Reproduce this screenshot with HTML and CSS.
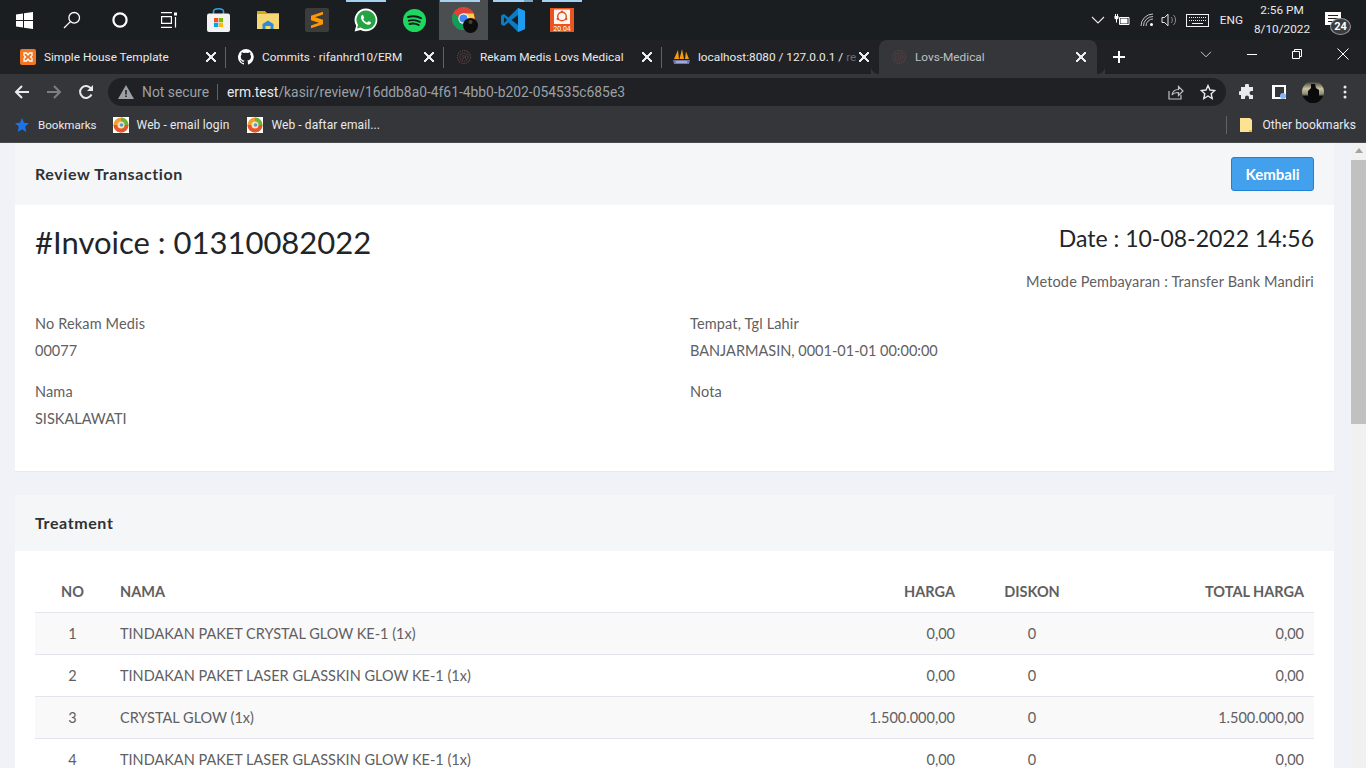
FILE: index.html
```html
<!DOCTYPE html>
<html lang="en">
<head>
    <meta charset="UTF-8">
    <title>Lovs-Medical</title>
    <link rel="stylesheet" href="styles.css">
</head>
<body>

<div class="taskbar">
    <div class="task-item task-sys"><svg width="17" height="17" viewBox="0 0 17 17"><path fill="#fff" d="M0 2.400 7 1.400V8H0zM8 1.200 17 0V8H8zM0 9H7V15.600L0 14.600zM8 9H17V17L8 15.800z"/></svg></div>
    <div class="task-item task-sys"><svg width="18" height="18" viewBox="0 0 18 18" fill="none" stroke="#fff" stroke-width="1.300"><circle cx="11.200" cy="6.800" r="5.300"/><path d="M7.400 10.600 1 17"/></svg></div>
    <div class="task-item task-sys"><svg width="16" height="16" viewBox="0 0 16 16" fill="none" stroke="#fff" stroke-width="2.200"><circle cx="8" cy="8" r="6.600"/></svg></div>
    <div class="task-item task-sys"><svg width="17" height="16" viewBox="0 0 17 16" fill="none" stroke="#fff" stroke-width="1.200"><path d="M1 .6H12M1 15.400H12M1.600 4.600H11.400V11.400H1.600z"/><path d="M15.500 5V15.500"/><path d="M14 .5h3v3h-3z" fill="#fff" stroke="none"/></svg></div>
    <div class="task-item task-first"><svg width="23" height="24" viewBox="0 0 23 24"><path d="M6.500 7V3.500C6.500 1.500 8 .8 11.500.8S16.500 1.500 16.500 3.500V7" fill="none" stroke="#2aa4e6" stroke-width="1.600"/><rect y="5.500" width="23" height="18.500" rx="2" fill="#f2f2f2"/><path fill="#f25022" d="M7 10h4.200v4.200H7z"/><path fill="#7fba00" d="M11.800 10H16v4.200h-4.200z"/><path fill="#00a4ef" d="M7 14.800h4.200V19H7z"/><path fill="#ffb900" d="M11.800 14.800H16V19h-4.200z"/></svg></div>
    <div class="task-item"><svg width="22" height="18" viewBox="0 0 22 18"><path fill="#d9a21f" d="M0 0h8l2 2h12v6H0z"/><path fill="#f7d774" d="M0 3h22v15H0z"/><path fill="#2f8ad8" d="M5.500 13 11 9.500 16.500 13v5h-3v-3h-5v3h-3z"/></svg></div>
    <div class="task-item"><svg width="24" height="24" viewBox="0 0 24 24"><rect width="24" height="24" rx="2" fill="#3c3c3c"/><path fill="#ff9800" d="M18 3.800 6 7.800v4.400l8 2.600-8 2.800v2.600l12-4v-4.500L10 9.200l8-2.700z"/></svg></div>
    <div class="task-item"><span class="line"></span><svg width="24" height="24" viewBox="0 0 24 24"><path fill="#fff" d="M12 .5a11.400 11.400 0 0 0-9.800 17.200L.6 23.500l6-1.500A11.400 11.400 0 1 0 12 .5z"/><path fill="#25a244" d="M12 2.500a9.400 9.400 0 0 0-8 14.400l-1 3.600 3.700-1A9.400 9.400 0 1 0 12 2.500z"/><path fill="#fff" d="M8.700 6.800c-.3 0-.8.200-1.100.6-.8.900-1 2.300-.3 3.800 1.200 2.500 3.200 4.400 5.800 5.300 1.500.5 2.800.2 3.500-.7.400-.5.500-1.200.4-1.500l-2.200-1.100c-.3-.1-.5 0-.7.200l-.7.900c-.2.200-.4.200-.6.100-1.500-.6-2.600-1.600-3.400-3-.1-.2-.1-.4.100-.6l.6-.7c.1-.2.100-.4 0-.6l-.9-2.200c-.1-.3-.3-.4-.5-.4z"/></svg></div>
    <div class="task-item"><svg width="23" height="23" viewBox="0 0 23 23"><circle cx="11.500" cy="11.500" r="11.500" fill="#1ed760"/><path d="M5 8c4.500-1.200 9-1 13 1.200M5.800 11.700c3.800-1 7.600-.8 11 1.100M6.500 15c3.200-.8 6.300-.6 9.200 1" fill="none" stroke="#14181a" stroke-width="1.900" stroke-linecap="round"/></svg></div>
    <div class="task-item active"><span class="line"></span><svg class="chrome-icon" width="26" height="26" viewBox="0 0 26 26"><circle cx="11.500" cy="11.500" r="11.500" fill="#db4437"/><path fill="#ffcd40" d="M11.500 6.500h10a11.500 11.500 0 0 1-5.700 15l-4-8z"/><path fill="#0f9d58" d="M1.500 6a11.500 11.500 0 0 0 10.800 17l4-7.500-5-2z"/><circle cx="11.500" cy="11.500" r="5.200" fill="#fff"/><circle cx="11.500" cy="11.500" r="4.100" fill="#4285f4"/><circle cx="18.500" cy="18.500" r="7.500" fill="#0d0d0d"/><circle cx="18.500" cy="15" r="2" fill="#4a4436"/></svg></div>
    <div class="task-item"><span class="line line-stack"></span><svg width="24" height="24" viewBox="0 0 24 24"><path fill="#0a7cc4" d="M17 0 7.500 9.500 3 6 0 7.500v9L3 18l4.500-3.500L17 24l7-3V3zM3 9l3 3-3 3zm14-2v10l-6.500-5z"/><path fill="#1f9cf0" d="M17 0l7 3v18l-7 3z"/></svg></div>
    <div class="task-item"><span class="line"></span><svg width="24" height="24" viewBox="0 0 24 24"><path fill="#e95420" d="M0 0h24v24H0z"/><rect x="4" y="1.500" width="16" height="14.500" fill="#fff" opacity=".95"/><circle cx="12" cy="8.500" r="4.300" fill="none" stroke="#e95420" stroke-width="1.500"/><circle cx="12" cy="3.800" r="1.200" fill="#e95420"/><circle cx="7.800" cy="11" r="1.200" fill="#e95420"/><circle cx="16.200" cy="11" r="1.200" fill="#e95420"/><text x="12" y="22.500" class="ubuntu-ver">20.04</text></svg></div>
    <div class="tray">
        <svg width="14" height="8" viewBox="0 0 14 8" fill="none" stroke="#e8e8e8" stroke-width="1.100"><path d="M1 1l6 6 6-6"/></svg>
        <svg class="tray-power" width="16" height="12" viewBox="0 0 16 12"><path fill="none" stroke="#fff" d="M5.500 3.500H15V10.500H5.500z"/><path fill="#fff" d="M6.500 4.500h7v5h-7zM1 0h1v2H1zM3 0h1v2H3zM.5 2h4v2.500l-1.500 1v3H2v-3L.5 4.500z"/></svg>
        <svg class="tray-wifi" width="15" height="14" viewBox="0 0 15 14" fill="none" stroke="#d4d4d4"><path d="M1 13A12 12 0 0 1 13 1M3.500 13A9.500 9.500 0 0 1 13 3.500M6 13A7 7 0 0 1 13 6" stroke-width=".9"/><circle cx="11.500" cy="11.500" r="1.500" fill="#fff" stroke="none"/></svg>
        <svg class="tray-sound" width="17" height="14" viewBox="0 0 17 14" fill="none" stroke="#e8e8e8"><path d="M1 4.500h2.500L7 1.200v11.600L3.500 9.500H1z"/><path d="M10 4a4 4 0 0 1 0 6M12.500 2a7 7 0 0 1 0 10" stroke="#8a8a8a"/></svg>
        <svg class="tray-keys" width="23" height="13" viewBox="0 0 23 13" fill="none" stroke="#f0f0f0"><rect x=".5" y=".5" width="22" height="12"/><path d="M3 3.500h17M3 6.500h17" stroke-dasharray="1 1"/><path d="M6 9.500h11"/></svg>
        <span class="tray-lang">ENG</span>
        <div class="tray-clock"><span>2:56 PM</span><span>8/10/2022</span></div>
        <div class="tray-note">
            <svg width="16" height="13" viewBox="0 0 16 13"><path fill="#fff" d="M0 0h16v13H0z"/><path stroke="#222" d="M3 3.500h10M3 6.500h10M3 9.500h6"/></svg>
            <span class="tray-badge">24</span>
        </div>
    </div>
</div>

<div class="tabstrip">
    <div class="tab">
        <svg class="favicon" width="16" height="16" viewBox="0 0 16 16"><rect width="16" height="16" rx="2" fill="#f37623"/><path d="M4 4h2.500L8 6l1.500-2H12v2.500L10.500 8 12 9.500V12H9.500L8 10l-1.500 2H4V9.500L5.500 8 4 6.500z" fill="none" stroke="#fff" stroke-width="1.300"/></svg>
        <span class="tab-title">Simple House Template</span>
        <span class="tab-close"></span>
    </div>
    <div class="tab">
        <svg class="favicon" width="16" height="16" viewBox="0 0 16 16"><path fill="#fff" d="M8 0a8 8 0 0 0-2.500 15.600c.4.100.5-.2.500-.4v-1.400c-2.200.5-2.700-1-2.700-1-.4-.9-.9-1.200-.9-1.200-.7-.5.100-.5.100-.5.800.1 1.200.8 1.200.8.700 1.200 1.900.9 2.300.7.100-.5.300-.9.500-1.100-1.800-.2-3.700-.9-3.700-4 0-.9.300-1.600.8-2.100-.1-.2-.4-1 .1-2.100 0 0 .7-.2 2.200.8a7.600 7.600 0 0 1 4 0c1.500-1 2.200-.8 2.200-.8.400 1.100.2 1.900.1 2.100.5.600.8 1.300.8 2.100 0 3.100-1.900 3.700-3.700 3.900.3.300.6.800.6 1.500v2.200c0 .2.100.5.600.4A8 8 0 0 0 8 0z"/></svg>
        <span class="tab-title">Commits · rifanhrd10/ERM</span>
        <span class="tab-close"></span>
    </div>
    <div class="tab">
        <svg class="favicon" width="16" height="16" viewBox="0 0 16 16" fill="none" stroke="#5a3f3f" stroke-width="1.200" stroke-dasharray="1.500 .8"><circle cx="8" cy="8" r="6.500"/><circle cx="8" cy="8" r="4"/><circle cx="8" cy="8" r="1.500"/></svg>
        <span class="tab-title">Rekam Medis Lovs Medical</span>
        <span class="tab-close"></span>
    </div>
    <div class="tab tab-pma">
        <svg class="favicon" width="17" height="16" viewBox="0 0 17 16"><path fill="#f89c0e" d="M5 1 6 10H1zM9 0 11 10H6.500zM13 2.500 16 10h-4z"/><path fill="#6c78af" d="M0 11h17l-1 4H1z"/><path fill="#d8dcef" d="M3 12.500h11v1H3z"/></svg>
        <span class="tab-title">localhost:8080 / 127.0.0.1 / <span class="fade">re</span></span>
        <span class="tab-close"></span>
    </div>
    <div class="tab tab-active">
        <svg class="favicon" width="16" height="16" viewBox="0 0 16 16" fill="none" stroke="#5a3f3f" stroke-width="1.200" stroke-dasharray="1.500 .8"><circle cx="8" cy="8" r="6.500"/><circle cx="8" cy="8" r="4"/><circle cx="8" cy="8" r="1.500"/></svg>
        <span class="tab-title">Lovs-Medical</span>
        <span class="tab-close"></span>
    </div>
    <svg class="tab-new" width="14" height="14" viewBox="0 0 14 14" stroke="#fff" stroke-width="2"><path d="M7 1v12M1 7h12"/></svg>
    <div class="win-controls">
        <svg width="12" height="7" viewBox="0 0 12 7" fill="none" stroke="#c8c8c8"><path d="M1 .8l5 5 5-5"/></svg>
        <svg width="10" height="10" viewBox="0 0 10 10" stroke="#fff"><path d="M0 5.500h10"/></svg>
        <svg width="10" height="10" viewBox="0 0 10 10" fill="none" stroke="#fff"><path d="M.5 2.500h7v7h-7zM2.500 2.500v-2h7v7h-2"/></svg>
        <svg width="12" height="12" viewBox="0 0 12 12" stroke="#fff"><path d="M.5.500l11 11M11.500.500l-11 11"/></svg>
    </div>
</div>

<div class="toolbar">
    <svg class="nav-btn" width="16" height="16" viewBox="0 0 16 16" fill="none" stroke="#e8eaed" stroke-width="2"><path d="M15 8H2M8 2 2 8l6 6"/></svg>
    <svg class="nav-btn" width="16" height="16" viewBox="0 0 16 16" fill="none" stroke="#7d7f83" stroke-width="2"><path d="M1 8h13M8 2l6 6-6 6"/></svg>
    <svg class="nav-btn" width="16" height="16" viewBox="0 0 16 16" fill="none" stroke="#e8eaed" stroke-width="2"><path d="M13.500 10.500A6 6 0 1 1 13 4.500"/><path fill="#e8eaed" stroke="none" d="M15 1v6H9z"/></svg>
    <div class="omnibox">
        <svg width="16" height="14" viewBox="0 0 16 14"><path fill="#9aa0a6" d="M8 0l8 14H0z"/><path fill="#202124" d="M7.200 5h1.600v4.500H7.200zM7.200 10.500h1.600V12H7.200z"/></svg>
        <span class="secure">Not secure</span>
        <span class="omni-sep"></span>
        <span class="url"><b>erm.test</b>/kasir/review/16ddb8a0-4f61-4bb0-b202-054535c685e3</span>
        <svg class="omni-share" width="16" height="16" viewBox="0 0 16 16" fill="none" stroke="#bdc1c6" stroke-width="1.200"><path d="M1 7v8h12v-4"/><path d="M4 11c.5-3.500 3-5.500 6.500-5.500V2.500L15 7l-4.500 4.500V8.500C8 8.500 5.500 9 4 11z"/></svg>
        <svg class="omni-star" width="16" height="16" viewBox="0 0 16 16" fill="none" stroke="#e8eaed" stroke-width="1.400"><path d="M8 1.500l2 4.500 4.800.5-3.600 3.200 1 4.800L8 12l-4.200 2.500 1-4.800L1.200 6.500 6 6z"/></svg>
    </div>
    <svg class="tool-puzzle" width="16" height="16" viewBox="0 0 16 16"><path fill="#e8eaed" d="M6 1.500a2 2 0 0 1 4 0V3h4v4h-1.500a2 2 0 0 0 0 4H14v4h-4v-1.500a2 2 0 0 0-4 0V15H2v-4h-.5a2 2 0 0 1 0-4H2V3h4z"/></svg>
    <svg class="tool-panel" width="14" height="14" viewBox="0 0 14 14"><path fill="none" stroke="#fff" stroke-width="2" d="M1 1h12v12H1z"/><path fill="#fff" d="M1 1h2v12H1z"/><circle cx="11" cy="11" r="3" fill="#8ab4f8"/></svg>
    <div class="avatar"><svg width="22" height="22" viewBox="0 0 22 22"><defs><linearGradient id="sky" x1="0" y1="0" x2="0" y2="1"><stop offset="0" stop-color="#2e2c26"/><stop offset=".35" stop-color="#c9c4a5"/><stop offset=".6" stop-color="#8b8a70"/><stop offset=".7" stop-color="#0b0b0b"/></linearGradient></defs><path fill="url(#sky)" d="M0 0h22v22H0z"/><path fill="#0b0b0b" d="M9 3h4l1 4 3 2v13H6V10l3-3z"/></svg></div>
    <svg class="tool-dots" width="4" height="14" viewBox="0 0 4 14" fill="#e8eaed"><circle cx="2" cy="2" r="1.500"/><circle cx="2" cy="7" r="1.500"/><circle cx="2" cy="12" r="1.500"/></svg>
</div>

<div class="bookmarks">
    <svg class="bm-star" width="14" height="14" viewBox="0 0 14 14"><path fill="#1a73e8" d="M7 0l2 4.800 5 .5-3.800 3.300L11.300 14 7 11.200 2.700 14l1.100-5.400L0 5.300l5-.5z"/></svg>
    <span class="bm-label bm-first">Bookmarks</span>
    <svg class="bm-icon" width="16" height="16" viewBox="0 0 16 16"><path fill="#fff" d="M0 0h16v16H0z"/><circle cx="8" cy="8" r="7.500" fill="#f0a030"/><path fill="#6cb33f" d="M8 .5A7.500 7.500 0 0 1 15.500 8H8z"/><path fill="#e4572e" d="M.5 8h15A7.500 7.500 0 0 1 .5 8z"/><circle cx="8" cy="8" r="3.500" fill="#f7e3b5"/><circle cx="8.500" cy="8" r="1.800" fill="#5b9bd5"/></svg>
    <span class="bm-label">Web - email login</span>
    <svg class="bm-icon" width="16" height="16" viewBox="0 0 16 16"><path fill="#fff" d="M0 0h16v16H0z"/><circle cx="8" cy="8" r="7.500" fill="#f0a030"/><path fill="#6cb33f" d="M8 .5A7.500 7.500 0 0 1 15.500 8H8z"/><path fill="#e4572e" d="M.5 8h15A7.500 7.500 0 0 1 .5 8z"/><circle cx="8" cy="8" r="3.500" fill="#f7e3b5"/><circle cx="8.500" cy="8" r="1.800" fill="#5b9bd5"/></svg>
    <span class="bm-label">Web - daftar email...</span>
    <span class="bm-sep"></span>
    <svg width="12" height="14" viewBox="0 0 12 14"><path fill="#fde293" d="M0 0h10l2 2v12H0z"/><path fill="#f6bf26" d="M9 12h3v2H9z"/></svg>
    <span class="bm-label bm-other">Other bookmarks</span>
</div>

<div class="viewport">
    <div class="page">
        <section class="card card-invoice">
            <header class="card-header">
                <h4>Review Transaction</h4>
                <a class="btn-back">Kembali</a>
            </header>
            <div class="card-body">
                <div class="invoice-top">
                    <h2>#Invoice : 01310082022</h2>
                    <div class="invoice-meta">
                        <h3>Date : 10-08-2022 14:56</h3>
                        <p>Metode Pembayaran : Transfer Bank Mandiri</p>
                    </div>
                </div>
                <div class="fields">
                    <div class="field"><span class="field-label">No Rekam Medis</span><span>00077</span></div>
                    <div class="field"><span class="field-label">Tempat, Tgl Lahir</span><span>BANJARMASIN, 0001-01-01 00:00:00</span></div>
                    <div class="field"><span class="field-label">Nama</span><span>SISKALAWATI</span></div>
                    <div class="field"><span class="field-label">Nota</span></div>
                </div>
            </div>
        </section>

        <section class="card">
            <header class="card-header card-header-plain">
                <h4>Treatment</h4>
            </header>
            <div class="card-body-table">
                <table class="treatment">
                    <thead>
                        <tr>
                            <th class="col-no">NO</th>
                            <th class="col-name">NAMA</th>
                            <th class="col-price">HARGA</th>
                            <th class="col-disc">DISKON</th>
                            <th class="col-total">TOTAL HARGA</th>
                        </tr>
                    </thead>
                    <tbody>
                        <tr>
                            <td class="col-no">1</td>
                            <td class="col-name">TINDAKAN PAKET CRYSTAL GLOW KE-1 (1x)</td>
                            <td class="col-price">0,00</td>
                            <td class="col-disc">0</td>
                            <td class="col-total">0,00</td>
                        </tr>
                        <tr>
                            <td class="col-no">2</td>
                            <td class="col-name">TINDAKAN PAKET LASER GLASSKIN GLOW KE-1 (1x)</td>
                            <td class="col-price">0,00</td>
                            <td class="col-disc">0</td>
                            <td class="col-total">0,00</td>
                        </tr>
                        <tr>
                            <td class="col-no">3</td>
                            <td class="col-name">CRYSTAL GLOW (1x)</td>
                            <td class="col-price">1.500.000,00</td>
                            <td class="col-disc">0</td>
                            <td class="col-total">1.500.000,00</td>
                        </tr>
                        <tr>
                            <td class="col-no">4</td>
                            <td class="col-name">TINDAKAN PAKET LASER GLASSKIN GLOW KE-1 (1x)</td>
                            <td class="col-price">0,00</td>
                            <td class="col-disc">0</td>
                            <td class="col-total">0,00</td>
                        </tr>
                    </tbody>
                </table>
            </div>
        </section>
    </div>
    <div class="scrollbar">
        <span class="scroll-arrow"></span>
        <span class="scroll-thumb"></span>
    </div>
</div>

</body>
</html>
```

FILE: styles.css
```css
* {
    box-sizing: border-box;
}
html, body {
    margin: 0;
    height: 768px;
    overflow: hidden;
}
body {
    display: flex;
    flex-direction: column;
    font-family: Roboto, Arial, sans-serif;
    background-color: #f1f2f7;
}

/* windows taskbar */
.taskbar {
    height: 40px;
    flex: none;
    display: flex;
    background-color: #1b1e21;
    color: #fff;
}
.task-item {
    width: 49px;
    height: 40px;
    flex: none;
    position: relative;
    display: flex;
    align-items: center;
    justify-content: center;
}
.task-sys {
    width: 48px;
}
.task-first {
    margin-left: 2px;
}
.task-item.active {
    background-color: #4b4e51;
}
.chrome-icon {
    margin-left: 3px;
}
.line {
    position: absolute;
    top: 0;
    left: 5px;
    right: 4px;
    height: 2px;
    background-color: #a6d0f0;
}
.active .line {
    left: 1px;
    right: 8px;
}
.line-stack {
    border-right: 9px solid #7ea4c2;
}
.ubuntu-ver {
    font-size: 7px;
    fill: #fff;
    text-anchor: middle;
}
.tray {
    margin-left: auto;
    display: flex;
    align-items: center;
    padding-right: 17px;
    font-size: 11.8px;
}
.tray-power {
    margin-left: 9px;
}
.tray-wifi {
    margin-left: 10px;
}
.tray-sound {
    margin-left: 6px;
}
.tray-keys {
    margin-left: 8px;
}
.tray-lang {
    margin-left: 11px;
    color: #e8e8e8;
}
.tray-clock {
    width: 70px;
    margin-left: 4px;
    margin-right: 8px;
    display: flex;
    flex-direction: column;
    align-items: center;
    line-height: 19px;
    color: #e8e8e8;
}
.tray-note {
    position: relative;
    width: 24px;
    height: 24px;
}
.tray-note svg {
    display: block;
    margin-top: 4px;
}
.tray-badge {
    position: absolute;
    left: 5px;
    top: 10px;
    width: 21px;
    height: 17px;
    border-radius: 50%;
    border: 1px solid #999;
    background-color: #3a3c3e;
    font-size: 11px;
    font-weight: 700;
    line-height: 15px;
    text-align: center;
}

/* chrome tabs */
.tabstrip {
    height: 34px;
    flex: none;
    display: flex;
    align-items: flex-end;
    padding-left: 8px;
    background-color: #202124;
    color: #e8eaed;
    font-size: 11.8px;
}
.tab {
    width: 218px;
    height: 34px;
    flex: none;
    display: flex;
    align-items: center;
    padding-left: 12px;
    padding-right: 10px;
    position: relative;
}
.tab::after {
    content: "";
    position: absolute;
    right: 0;
    top: 7px;
    width: 1px;
    height: 21px;
    background-color: #5f6368;
}
.tab-pma {
    width: 217px;
}
.tab-pma::after {
    display: none;
}
.tab-pma .favicon {
    margin-left: -1px;
}
.fade {
    color: #6a6c70;
}
.tab-active {
    background-color: #35363a;
    border-radius: 8px 8px 0 0;
    padding-right: 11px;
}
.tab-active::after {
    display: none;
}
/* the little curves at the foot of the active tab */
.tab-active::before {
    content: "";
    position: absolute;
    left: -8px;
    right: -8px;
    bottom: 0;
    height: 8px;
    background:
        radial-gradient(circle at 0 0, transparent 8px, #35363a 8px) right top / 8px 8px no-repeat,
        radial-gradient(circle at 100% 0, transparent 8px, #35363a 8px) left top / 8px 8px no-repeat;
}
.favicon {
    flex: none;
    margin-right: 8px;
}
.tab-title {
    flex: 1;
    white-space: nowrap;
}
.tab-active .tab-title {
    color: #bdc1c6;
}
.tab-close {
    flex: none;
    width: 10px;
    height: 10px;
    background:
        linear-gradient(45deg, transparent 44%, #e8eaed 44%, #e8eaed 56%, transparent 56%),
        linear-gradient(-45deg, transparent 44%, #e8eaed 44%, #e8eaed 56%, transparent 56%);
}
.tab-new {
    margin-left: 15px;
    margin-bottom: 10px;
    flex: none;
}
.win-controls {
    flex: 1;
    height: 34px;
    display: flex;
    align-items: center;
    justify-content: flex-end;
    gap: 35px;
    padding: 0 17px 6px 0;
}

/* chrome toolbar */
.toolbar {
    height: 36px;
    flex: none;
    display: flex;
    align-items: center;
    padding-left: 14px;
    background-color: #35363a;
}
.nav-btn {
    flex: none;
    margin-right: 16px;
}
.omnibox {
    width: 1118px;
    height: 28px;
    margin-left: -2px;
    flex: none;
    display: flex;
    align-items: center;
    padding-left: 10px;
    border-radius: 14px;
    background-color: #202124;
    font-size: 13.85px;
}
.secure {
    margin-left: 8px;
    color: #9aa0a6;
}
.omni-sep {
    width: 1px;
    height: 16px;
    margin: 0 9px 0 8px;
    background-color: #5f6368;
}
.url {
    color: #9aa0a6;
    white-space: nowrap;
}
.url b {
    font-weight: 400;
    color: #e8eaed;
}
.omni-share {
    margin-left: auto;
}
.omni-star {
    margin-left: 16px;
    margin-right: 10px;
}
.tool-puzzle {
    flex: none;
    margin-left: 13px;
}
.tool-panel {
    flex: none;
    margin-left: 17px;
}
.avatar {
    width: 22px;
    height: 22px;
    margin-left: 16px;
    border-radius: 50%;
    overflow: hidden;
    flex: none;
}
.tool-dots {
    margin-left: 19px;
    flex: none;
}

/* chrome bookmarks */
.bookmarks {
    height: 33px;
    flex: none;
    display: flex;
    align-items: center;
    padding: 0 10px 3px 15px;
    background-color: #35363a;
    border-bottom: 1px solid #4a4b4f;
    color: #e8eaed;
    font-size: 12px;
}
.bm-label {
    white-space: nowrap;
    letter-spacing: .1px;
}
.bm-first {
    margin-left: 9px;
    margin-right: 16px;
    font-size: 11.6px;
    letter-spacing: 0;
}
.bm-icon {
    flex: none;
    margin-right: 8px;
}
.bm-icon + .bm-label {
    margin-right: 18px;
}
.bm-sep {
    width: 1px;
    height: 18px;
    margin-left: auto;
    margin-right: 13px;
    background-color: #5f6368;
}
.bm-other {
    margin-left: 10px;
}

/* page */
.viewport {
    flex: 1;
    min-height: 0;
    display: flex;
    overflow: hidden;
}
.page {
    width: 1351px;
    padding: 0 17px 0 15px;
    flex: none;
    font-family: Lato, sans-serif;
    font-size: 14.5px;
    color: #5f6062;
}
.card {
    background-color: #fff;
}
.card-invoice {
    margin-bottom: 23px;
    border-bottom: 1px solid #e8e9ef;
}
.card-header {
    height: 62px;
    display: flex;
    align-items: center;
    justify-content: space-between;
    padding: 0 20px;
    background-color: #f5f6f8;
}
.card-header-plain {
    height: 56px;
}
.card-header h4 {
    margin: 0 0 2px;
    font-size: 16px;
    font-weight: 700;
    letter-spacing: .6px;
    color: #303133;
}
.btn-back {
    width: 83px;
    height: 34px;
    border: 1px solid #1f80d8;
    border-radius: 3px;
    background-color: #42a0ec;
    color: #fff;
    font-size: 15px;
    font-weight: 700;
    line-height: 32px;
    text-align: center;
}
.card-body {
    height: 266px;
    padding: 19px 20px 0;
}
.card-body-table {
    padding: 20px 20px 0;
}
.invoice-top {
    display: flex;
    justify-content: space-between;
    align-items: flex-start;
}
.invoice-top h2 {
    margin: 0;
    font-size: 31px;
    font-weight: 400;
    line-height: 36px;
    color: #212529;
}
.invoice-top h3 {
    margin: 1px 0 0;
    font-size: 23px;
    font-weight: 400;
    line-height: 27px;
    color: #212529;
}
.invoice-meta {
    text-align: right;
}
.invoice-meta p {
    margin: 20px 0 0;
    line-height: 20px;
    letter-spacing: .15px;
}
.fields {
    display: grid;
    grid-template-columns: 655px 1fr;
    margin-top: 22px;
}
.field {
    height: 68px;
    display: flex;
    flex-direction: column;
    gap: 7px;
    line-height: 20px;
}
.field-label {
    letter-spacing: .15px;
}
.treatment {
    width: 100%;
    border-collapse: collapse;
    table-layout: fixed;
}
.treatment th {
    height: 41px;
    padding: 0 10px;
    font-weight: 700;
    border-bottom: 1px solid #e4e5ec;
}
.treatment td {
    height: 42px;
    padding: 0 10px;
    border-bottom: 1px solid #e4e5ec;
}
.treatment tbody tr:nth-child(odd) td {
    background-color: #f9f9f9;
}
.col-no {
    width: 75px;
    text-align: center;
}
.col-name {
    text-align: left;
}
.col-price {
    width: 180px;
    text-align: right;
}
.col-disc {
    width: 134px;
    text-align: center;
}
.col-total {
    width: 215px;
    text-align: right;
}

/* fake scrollbar since the page is clipped to one screen */
.scrollbar {
    width: 15px;
    flex: none;
    background-color: #f1f1f1;
    display: flex;
    flex-direction: column;
    align-items: center;
}
.scroll-arrow {
    margin-top: 5px;
    width: 0;
    height: 0;
    border-left: 4px solid transparent;
    border-right: 4px solid transparent;
    border-bottom: 5px solid #a3a3a3;
}
.scroll-thumb {
    width: 100%;
    height: 264px;
    margin-top: 7px;
    background-color: #c1c1c1;
}
```
